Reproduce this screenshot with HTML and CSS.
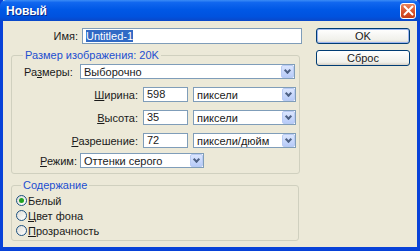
FILE: index.html
```html
<!DOCTYPE html>
<html lang="ru">
<head>
    <meta charset="UTF-8">
    <title>Новый</title>
    <link rel="stylesheet" href="styles.css">
</head>
<body>
    <div class="window">
        <div class="title-bar">
            <span class="title">Новый</span>
            <span class="close-btn">
                <svg width="11" height="11" viewBox="0 0 11 11"><path d="M1.5 1.5 L9.5 9.5 M9.5 1.5 L1.5 9.5" stroke="#fff" stroke-width="2" stroke-linecap="round"/></svg>
            </span>
        </div>
        <div class="content">
            <div class="left-col">
                <div class="name-row">
                    <label class="name-label">Имя:</label>
                    <div class="textbox name-box"><span class="selected">Untitled-1</span></div>
                </div>

                <fieldset class="group size-group">
                    <legend>Размер изображения: 20K</legend>
                    <div class="row first-row">
                        <span class="lbl lbl-left">Ра<u>з</u>меры:</span>
                        <div class="combo combo-wide"><span>Выборочно</span><i class="arrow"></i></div>
                    </div>
                    <div class="row">
                        <span class="lbl lbl-dim"><u>Ш</u>ирина:</span>
                        <div class="textbox num-box">598</div>
                        <div class="combo combo-unit"><span>пиксели</span><i class="arrow"></i></div>
                    </div>
                    <div class="row">
                        <span class="lbl lbl-dim"><u>В</u>ысота:</span>
                        <div class="textbox num-box">35</div>
                        <div class="combo combo-unit"><span>пиксели</span><i class="arrow"></i></div>
                    </div>
                    <div class="row">
                        <span class="lbl lbl-dim"><u>Р</u>азрешение:</span>
                        <div class="textbox num-box">72</div>
                        <div class="combo combo-unit"><span>пиксели/дюйм</span><i class="arrow"></i></div>
                    </div>
                    <div class="row mode-row">
                        <span class="lbl lbl-right"><u>Р</u>ежим:</span>
                        <div class="combo mode-combo"><span>Оттенки серого</span><i class="arrow"></i></div>
                    </div>
                </fieldset>

                <fieldset class="group content-group">
                    <legend>Содержание</legend>
                    <div class="radio-row"><span class="radio checked"></span>Белый</div>
                    <div class="radio-row"><span class="radio"></span><u>Ц</u>вет фона</div>
                    <div class="radio-row"><span class="radio"></span><u>П</u>розрачность</div>
                </fieldset>
            </div>

            <div class="right-col">
                <div class="btn btn-default">OK</div>
                <div class="btn">Сброс</div>
            </div>
        </div>
    </div>
</body>
</html>
```

FILE: styles.css
```css
body {
    margin: 0;
    font-family: "Liberation Sans", Arial, sans-serif;
    font-size: 11px;
    color: #1a1a1a;
}
.window {
    width: 420px;
    height: 251px;
    box-sizing: border-box;
    background: #ece9d8;
    border: solid #0842d8;
    border-width: 0 3px 4px 3px;
    display: flex;
    flex-direction: column;
}
.title-bar {
    height: 21px;
    margin: 0 -3px;
    padding: 0 4px 0 6px;
    display: flex;
    align-items: center;
    justify-content: space-between;
    background: linear-gradient(#3b8cf6 0%, #1167ef 12%, #0058e6 45%, #0052de 80%, #0a47c8 100%);
    border-radius: 6px 6px 0 0;
}
.title {
    color: #fff;
    font-weight: bold;
    font-size: 12px;
    text-shadow: 1px 1px 0 #0a2a8a;
}
.close-btn {
    width: 16px;
    height: 16px;
    box-sizing: border-box;
    border: 1px solid #fff;
    border-radius: 3px;
    background: linear-gradient(#e9845c, #d7502a 60%, #c43d18);
    display: flex;
    align-items: center;
    justify-content: center;
}
.content {
    flex: 1;
    display: flex;
    padding: 7px 0 0 8px;
}
.left-col {
    width: 292px;
    flex: none;
}
.name-row {
    display: flex;
    align-items: center;
    height: 16px;
}
.name-label {
    width: 67px;
    text-align: right;
    margin-right: 4px;
}
.textbox {
    flex: none;
    box-sizing: border-box;
    height: 16px;
    border: 1px solid #7f9db9;
    background: #fff;
    padding: 0 3px;
    line-height: 14px;
}
.name-box {
    width: 220px;
}
.selected {
    background: #316ac5;
    color: #fff;
}
.group {
    width: 288px;
    box-sizing: border-box;
    margin: 0;
    border: 1px solid #d0d0bf;
    border-radius: 3px;
    padding: 0;
}
.group legend {
    color: #1d4fd0;
    padding: 0 2px;
    line-height: 13px;
}
.size-group {
    margin-top: 5px;
    padding: 2px 3px 5px 12px;
}
.size-group legend {
    margin-left: -1px;
}
.row {
    display: flex;
    align-items: center;
    height: 15px;
    margin-top: 8px;
}
.first-row {
    margin-top: 0;
}
.mode-row {
    margin-top: 5px;
}
.lbl {
    flex: none;
    width: 53px;
    margin-right: 3px;
    white-space: nowrap;
}
.lbl-right {
    text-align: right;
}
.lbl-dim {
    width: 114px;
    margin-right: 5px;
    text-align: right;
}
.num-box {
    width: 45px;
    height: 15px;
    margin-right: 5px;
    line-height: 13px;
}
.combo {
    flex: none;
    box-sizing: border-box;
    height: 15px;
    border: 1px solid #7f9db9;
    background: #fff;
    display: flex;
    align-items: center;
    justify-content: space-between;
    padding-left: 3px;
}
.combo-wide {
    width: 215px;
}
.combo-unit {
    width: 103px;
}
.mode-combo {
    flex: 0 0 124px;
    width: 124px;
    min-width: 124px;
}
.arrow {
    width: 13px;
    height: 13px;
    box-sizing: border-box;
    border: 1px solid #b9cbf3;
    border-radius: 2px;
    background: linear-gradient(#dbe6fe, #b7cbf8);
    position: relative;
}
.arrow::after {
    content: "";
    position: absolute;
    left: 3px;
    top: 2px;
    width: 3px;
    height: 3px;
    border: solid #4d6185;
    border-width: 0 2px 2px 0;
    transform: rotate(45deg);
}
.content-group {
    margin-top: 5px;
    padding: 1px 0 2px 4px;
}
.content-group legend {
    margin-left: 5px;
}
.radio-row {
    display: flex;
    align-items: center;
    height: 15px;
}
.radio {
    width: 11px;
    height: 11px;
    box-sizing: border-box;
    border: 1px solid #1c5180;
    border-radius: 50%;
    background: linear-gradient(135deg, #dcdcd6, #fff);
    margin-right: 1px;
    position: relative;
}
.radio.checked::after {
    content: "";
    position: absolute;
    left: 2px;
    top: 2px;
    width: 5px;
    height: 5px;
    border-radius: 50%;
    background: #21a121;
}
.right-col {
    margin-left: 13px;
    display: flex;
    flex-direction: column;
    gap: 6px;
}
.btn {
    width: 94px;
    height: 16px;
    box-sizing: border-box;
    border: 1px solid #003c74;
    border-radius: 3px;
    background: linear-gradient(#fff, #f0f0ea 80%, #d6d0c5);
    text-align: center;
    line-height: 14px;
}
.btn-default {
    box-shadow: inset 0 0 0 1px #9db6f0;
}
```
